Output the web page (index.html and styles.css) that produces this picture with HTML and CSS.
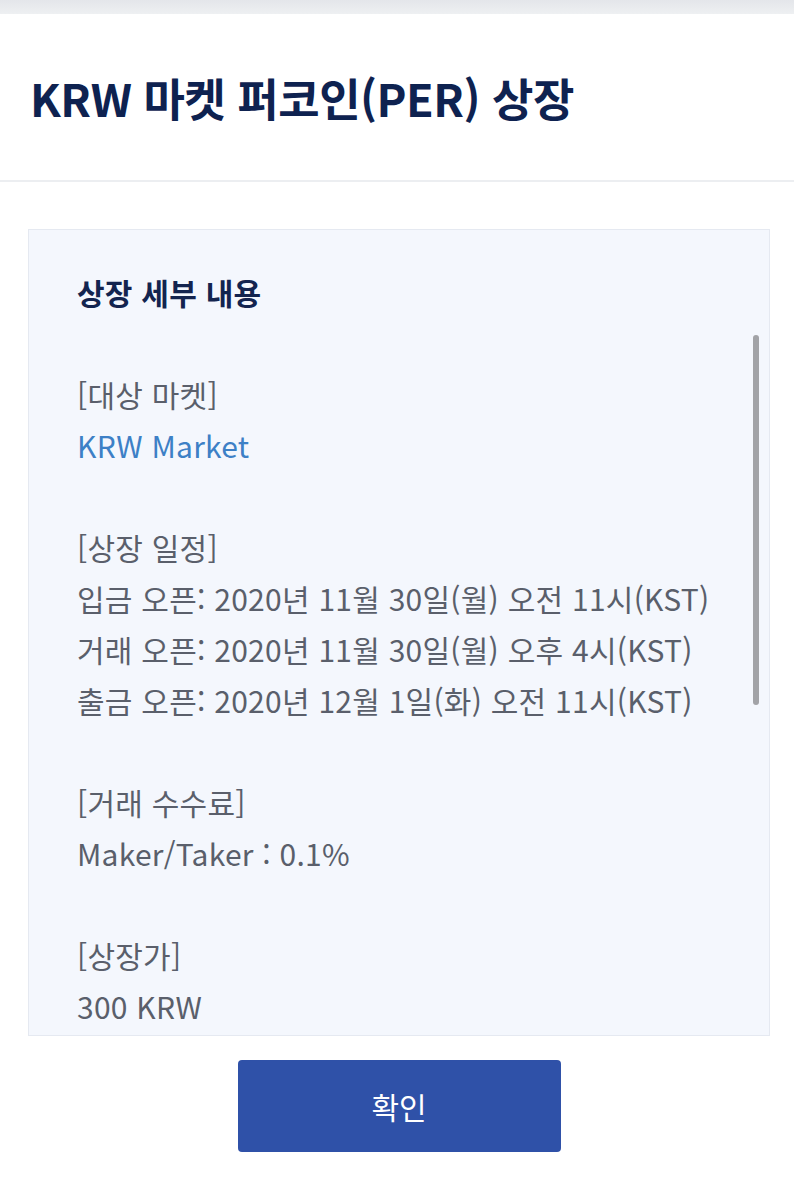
FILE: index.html
```html
<!DOCTYPE html>
<html lang="ko">
<head>
    <meta charset="UTF-8">
    <meta name="viewport" content="width=device-width, initial-scale=1.0">
    <title>KRW 마켓 퍼코인(PER) 상장</title>
    <link rel="stylesheet" href="styles.css">
</head>
<body>
    <div class="topbar"></div>
    <div class="header">
        <h1 class="title">KRW 마켓 퍼코인(PER) 상장</h1>
    </div>
    <div class="content">
        <div class="notice">
            <div class="scroll">
                <h2 class="notice-title">상장 세부 내용</h2>
                <p>[대상 마켓]<br><span class="link">KRW Market</span></p>
                <p>[상장 일정]<br>입금 오픈: 2020년 11월 30일(월) 오전 11시(KST)<br>거래 오픈: 2020년 11월 30일(월) 오후 4시(KST)<br>출금 오픈: 2020년 12월 1일(화) 오전 11시(KST)</p>
                <p>[거래 수수료]<br>Maker/Taker : 0.1%</p>
                <p>[상장가]<br>300 KRW</p>
            </div>
            <div class="thumb"></div>
        </div>
        <div class="actions">
            <button class="confirm">확인</button>
        </div>
    </div>
</body>
</html>
```

FILE: styles.css
```css
body {
    margin: 0;
    background-color: #fff;
    font-family: "Noto Sans CJK KR", "Noto Sans", sans-serif;
}
.topbar {
    height: 14px;
    background: linear-gradient(#e4e6ea, #eef0f2);
}
.header {
    height: 166px;
    border-bottom: 2px solid #eceef1;
    display: flex;
    align-items: center;
    padding-left: 30px;
}
.title {
    margin: 0;
    font-size: 45px;
    font-weight: 700;
    color: #0e2250;
    letter-spacing: -0.5px;
}
.content {
    padding: 47px 24px 0 28px;
}
.notice {
    position: relative;
    height: 805px;
    border: 1px solid #e5e9f1;
    background-color: #f4f7fd;
    overflow: hidden;
}
.scroll {
    padding: 37px 48px 0 48px;
    font-size: 30px;
    line-height: 51px;
    letter-spacing: 0.25px;
    color: #5a5f6b;
}
.notice-title {
    margin: 0 0 51px;
    font-size: 30px;
    font-weight: 700;
    color: #13244f;
    line-height: 51px;
}
.scroll p {
    margin: 0 0 51px;
}
.link {
    color: #3d80c6;
}
.thumb {
    position: absolute;
    top: 105px;
    right: 10px;
    width: 6px;
    height: 370px;
    border-radius: 3px;
    background-color: #a2a3a7;
}
.actions {
    display: flex;
    justify-content: center;
    padding-top: 24px;
}
.confirm {
    width: 323px;
    height: 92px;
    border: none;
    border-radius: 4px;
    background-color: #2f51a8;
    color: #fff;
    font-family: inherit;
    font-size: 30px;
}
```
